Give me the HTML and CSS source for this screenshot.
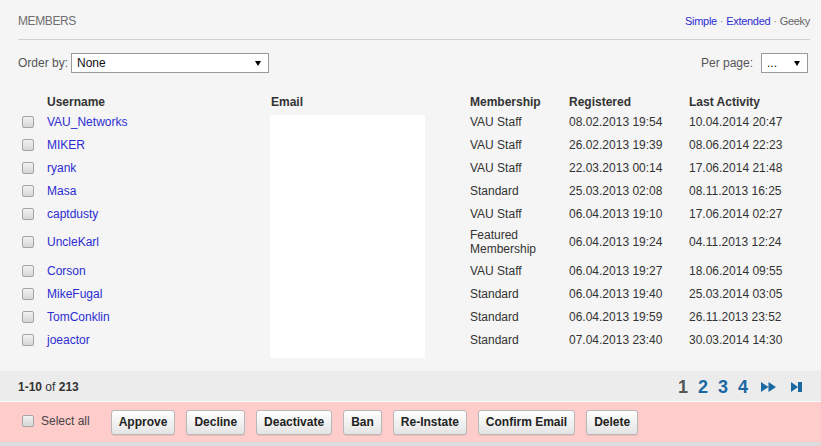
FILE: index.html
```html
<!DOCTYPE html>
<html>
<head>
<meta charset="utf-8">
<link rel="stylesheet" href="styles.css">
</head>
<body>
<div class="page">
  <div class="main">
    <div class="title-row">
      <span class="title">MEMBERS</span>
      <span class="views"><a class="link" href="#">Simple</a><span class="sep">·</span><a class="link" href="#">Extended</a><span class="sep">·</span><span class="cur">Geeky</span></span>
    </div>
    <div class="order-row">
      <span class="lbl">Order by:</span>
      <div class="select select-wide"><span class="sel-text">None</span><svg class="caret" width="6" height="5" viewBox="0 0 6 5"><path d="M0 0H6L3 5Z" fill="#000"/></svg></div>
      <div class="spacer"></div>
      <span class="lbl">Per page:</span>
      <div class="select select-small"><span class="sel-text">...</span><svg class="caret" width="6" height="5" viewBox="0 0 6 5"><path d="M0 0H6L3 5Z" fill="#000"/></svg></div>
    </div>
    <div class="table-wrap">
      <table class="members">
        <colgroup>
          <col class="c-check"><col class="c-user"><col class="c-email"><col class="c-mem"><col class="c-reg"><col class="c-last">
        </colgroup>
        <thead>
          <tr><th></th><th>Username</th><th>Email</th><th>Membership</th><th>Registered</th><th>Last Activity</th></tr>
        </thead>
        <tbody>
          <tr><td><input type="checkbox" class="cb"></td><td><a class="link" href="#">VAU_Networks</a></td><td></td><td>VAU Staff</td><td>08.02.2013 19:54</td><td>10.04.2014 20:47</td></tr>
          <tr><td><input type="checkbox" class="cb"></td><td><a class="link" href="#">MIKER</a></td><td></td><td>VAU Staff</td><td>26.02.2013 19:39</td><td>08.06.2014 22:23</td></tr>
          <tr><td><input type="checkbox" class="cb"></td><td><a class="link" href="#">ryank</a></td><td></td><td>VAU Staff</td><td>22.03.2013 00:14</td><td>17.06.2014 21:48</td></tr>
          <tr><td><input type="checkbox" class="cb"></td><td><a class="link" href="#">Masa</a></td><td></td><td>Standard</td><td>25.03.2013 02:08</td><td>08.11.2013 16:25</td></tr>
          <tr><td><input type="checkbox" class="cb"></td><td><a class="link" href="#">captdusty</a></td><td></td><td>VAU Staff</td><td>06.04.2013 19:10</td><td>17.06.2014 02:27</td></tr>
          <tr class="tall"><td><input type="checkbox" class="cb"></td><td><a class="link" href="#">UncleKarl</a></td><td></td><td>Featured Membership</td><td>06.04.2013 19:24</td><td>04.11.2013 12:24</td></tr>
          <tr><td><input type="checkbox" class="cb"></td><td><a class="link" href="#">Corson</a></td><td></td><td>VAU Staff</td><td>06.04.2013 19:27</td><td>18.06.2014 09:55</td></tr>
          <tr><td><input type="checkbox" class="cb"></td><td><a class="link" href="#">MikeFugal</a></td><td></td><td>Standard</td><td>06.04.2013 19:40</td><td>25.03.2014 03:05</td></tr>
          <tr><td><input type="checkbox" class="cb"></td><td><a class="link" href="#">TomConklin</a></td><td></td><td>Standard</td><td>06.04.2013 19:59</td><td>26.11.2013 23:52</td></tr>
          <tr><td><input type="checkbox" class="cb"></td><td><a class="link" href="#">joeactor</a></td><td></td><td>Standard</td><td>07.04.2013 23:40</td><td>30.03.2014 14:30</td></tr>
        </tbody>
      </table>
      <div class="redact"></div>
    </div>
  </div>
  <div class="footer">
    <div class="pager-bar">
      <span class="count"><b>1-10</b> of <b>213</b></span>
      <div class="pager">
        <span class="pg cur">1</span>
        <a class="pg" href="#">2</a>
        <a class="pg" href="#">3</a>
        <a class="pg" href="#">4</a>
        <a class="pg-icon next" href="#"><svg width="15" height="10" viewBox="0 0 15 10"><path d="M0 0L7.5 5L0 10Z M7.5 0L15 5L7.5 10Z" fill="#1b69a3"/></svg></a>
        <a class="pg-icon last" href="#"><svg width="11" height="10" viewBox="0 0 11 10"><path d="M0 0L7 5L0 10Z" fill="#1b69a3"/><rect x="7" y="0" width="4" height="10" fill="#1b69a3"/></svg></a>
      </div>
    </div>
    <div class="action-bar">
      <label class="select-all"><input type="checkbox" class="cb"><span>Select all</span></label>
      <div class="buttons">
        <button class="btn">Approve</button>
        <button class="btn">Decline</button>
        <button class="btn">Deactivate</button>
        <button class="btn">Ban</button>
        <button class="btn">Re-Instate</button>
        <button class="btn">Confirm Email</button>
        <button class="btn">Delete</button>
      </div>
    </div>
    <div class="bottom-strip"></div>
  </div>
</div>
</body>
</html>
```

FILE: styles.css
```css
* { box-sizing: border-box; }
html, body {
  margin: 0;
  padding: 0;
}
body {
  width: 821px;
  height: 446px;
  overflow: hidden;
  background: #f5f5f5;
  font-family: "Liberation Sans", Arial, sans-serif;
  font-size: 12px;
  color: #333;
}
.page {
  display: flex;
  flex-direction: column;
  height: 446px;
}
.main {
  padding: 0 11px 0 18px;
}
.link {
  color: #2c2cd2;
  text-decoration: none;
}
.title-row {
  height: 40px;
  border-bottom: 1px solid #cfcfcf;
  display: flex;
  align-items: center;
  justify-content: space-between;
  padding-top: 3px;
}
.title {
  color: #707070;
  font-size: 12px;
  letter-spacing: -0.4px;
}
.views {
  font-size: 11px;
  letter-spacing: -0.3px;
  color: #666;
}
.views .sep {
  margin: 0 3px;
  color: #888;
}
.views .cur { color: #666; }
.order-row {
  margin-top: 13px;
  height: 20px;
  display: flex;
  align-items: center;
}
.lbl {
  color: #555;
  font-size: 12px;
}
.spacer { flex: 1; }
.select {
  height: 20px;
  background: #fff;
  border: 1px solid #9a9a9a;
  display: flex;
  align-items: center;
  justify-content: space-between;
  padding: 0 7px 0 5px;
  color: #111;
}
.select-wide {
  width: 198px;
  margin-left: 3px;
}
.select-small {
  width: 47px;
  margin-left: 8px;
  margin-right: 2px;
}
.sel-text { font-size: 12px; }
.caret { display: block; }
.table-wrap {
  position: relative;
  margin-top: 19px;
}
.members {
  width: 792px;
  border-collapse: collapse;
  table-layout: fixed;
}
.c-check { width: 29px; }
.c-user { width: 224px; }
.c-email { width: 199px; }
.c-mem { width: 99px; }
.c-reg { width: 120px; }
.c-last { width: 121px; }
.members th {
  text-align: left;
  font-weight: bold;
  color: #333;
  height: 18px;
  padding: 0 0 1px 0;
  line-height: 14px;
  vertical-align: bottom;
}
.members td {
  height: 23px;
  padding: 0;
  vertical-align: middle;
  color: #333;
  line-height: 14px;
}
.members tr.tall td {
  height: 34px;
}
.members td:first-child {
  padding-left: 4px;
}
.cb {
  appearance: none;
  -webkit-appearance: none;
  width: 12px;
  height: 12px;
  margin: 0;
  display: block;
  border: 1px solid #a4a4a4;
  border-radius: 2px;
  background: linear-gradient(#f2f2f2, #d6d6d6);
}
.redact {
  position: absolute;
  left: 252px;
  top: 23px;
  width: 155px;
  height: 243px;
  background: #fff;
}
.footer {
  margin-top: auto;
}
.pager-bar {
  background: #ececec;
  display: flex;
  align-items: center;
  justify-content: space-between;
  padding: 1px 19px 0 18px;
  border-bottom: 1px solid #fafafa;
  height: 31px;
}
.count {
  color: #333;
  font-size: 12px;
}
.count b { color: #333; }
.pager {
  display: flex;
  align-items: center;
}
.pg {
  font-size: 18px;
  font-weight: bold;
  color: #1b69a3;
  text-decoration: none;
  margin-left: 10px;
  line-height: 20px;
}
.pg.cur {
  color: #555;
  margin-left: 0;
}
.pg-icon {
  display: block;
  line-height: 0;
}
.pg-icon.next { margin-left: 13px; }
.pg-icon.last { margin-left: 15px; }
.action-bar {
  height: 40px;
  background: #ffcccc;
  display: flex;
  align-items: center;
  padding-left: 22px;
}
.select-all {
  display: flex;
  align-items: center;
  color: #444;
  margin-top: -2px;
}
.select-all span {
  margin-left: 7px;
}
.buttons {
  display: flex;
  gap: 11px;
  margin-left: 21px;
}
.btn {
  height: 25px;
  padding: 0 7px;
  font-family: "Liberation Sans", Arial, sans-serif;
  font-size: 12px;
  font-weight: bold;
  color: #222;
  background: linear-gradient(#ffffff, #e4e4e4);
  border: 1px solid #b8b8b8;
  border-radius: 3px;
  box-shadow: 0 1px 0 rgba(0,0,0,0.08);
}
.bottom-strip {
  height: 4px;
  background: #dcdcdc;
}
```
